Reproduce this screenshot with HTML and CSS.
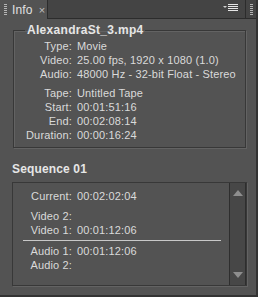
FILE: index.html
```html
<html>
<head>
  <title>Info</title>
  <link rel="stylesheet" href="styles.css">
</head>
<body>
  <div class="panel">
    <div class="tabbar">
      <div class="tab">
        <span class="grip"></span>
        <span class="tab-label">Info</span>
        <span class="tab-close">&times;</span>
      </div>
      <div class="tab-fill">
        <svg class="menu-icon" width="16" height="9" viewBox="0 0 16 9">
          <polygon points="0,2 4,2 2,4" fill="#cfcfcf"/>
          <rect x="5" y="0" width="10" height="1" fill="#e6e6e6"/>
          <rect x="5" y="2" width="10" height="1" fill="#e6e6e6"/>
          <rect x="5" y="4" width="10" height="1" fill="#e6e6e6"/>
          <rect x="5" y="6" width="10" height="1" fill="#e6e6e6"/>
        </svg>
      </div>
      <div class="grip-col"><span class="grip"></span></div>
    </div>

    <div class="content">
      <fieldset class="clip-box">
        <legend>AlexandraSt_3.mp4</legend>
        <div class="rows">
          <span class="lbl">Type:</span><span>Movie</span>
          <span class="lbl">Video:</span><span>25.00 fps, 1920 x 1080 (1.0)</span>
          <span class="lbl">Audio:</span><span>48000 Hz - 32-bit Float - Stereo</span>
        </div>
        <div class="rows group">
          <span class="lbl">Tape:</span><span>Untitled Tape</span>
          <span class="lbl">Start:</span><span>00:01:51:16</span>
          <span class="lbl">End:</span><span>00:02:08:14</span>
          <span class="lbl">Duration:</span><span>00:00:16:24</span>
        </div>
      </fieldset>

      <h3 class="seq-title">Sequence 01</h3>
      <div class="seq-box">
        <div class="seq-list">
          <div class="rows">
            <span class="lbl">Current:</span><span>00:02:02:04</span>
          </div>
          <div class="rows group2">
            <span class="lbl">Video 2:</span><span></span>
            <span class="lbl">Video 1:</span><span>00:01:12:06</span>
          </div>
          <div class="divider"></div>
          <div class="rows">
            <span class="lbl">Audio 1:</span><span>00:01:12:06</span>
            <span class="lbl">Audio 2:</span><span></span>
          </div>
        </div>
        <div class="scrollbar">
          <span class="arrow up"></span>
          <span class="arrow down"></span>
        </div>
      </div>
    </div>
  </div>
</body>
</html>
```

FILE: styles.css
```css
body {
  margin: 0;
  background: #535353;
  color: #dadada;
  font-family: "Liberation Sans", Arial, sans-serif;
  font-size: 11px;
  letter-spacing: 0.15px;
}

.panel {
  width: 256px;
  height: 295px;
  border-right: 2px solid #333;
  border-bottom: 2px solid #333;
  background: #535353;
}

.tabbar {
  display: flex;
  height: 19px;
}

.tab {
  display: flex;
  align-items: center;
  width: 47px;
  padding-left: 4px;
  box-sizing: border-box;
  background: #535353;
}

.grip {
  width: 3px;
  height: 11px;
  background: repeating-linear-gradient(#b5b5b5 0 1px, transparent 1px 2px);
}

.tab-label {
  margin-left: 5px;
  font-size: 12px;
  color: #e0e0e0;
}

.tab-close {
  margin-left: 6px;
  font-size: 11px;
  color: #c0c0c0;
}

.tab-fill {
  flex: 1;
  display: flex;
  align-items: center;
  justify-content: flex-end;
  background: #444;
  border-left: 1px solid #2c2c2c;
  border-bottom: 1px solid #2c2c2c;
  padding-right: 6px;
}

.menu-icon {
  margin-top: -1px;
}

.grip-col {
  width: 10px;
  display: flex;
  align-items: center;
  justify-content: center;
  background: #444;
  border-left: 1px solid #2c2c2c;
  border-bottom: 1px solid #2c2c2c;
}

.content {
  padding: 4px 0 0 13px;
}

.clip-box {
  width: 231px;
  margin: 0;
  padding: 2px 0 5px 0;
  border: 1px solid #383838;
  box-shadow: 1px 1px 0 #636363, inset 1px 1px 0 #636363;
}

.clip-box legend {
  margin-left: 11px;
  padding: 0 2px;
  font-weight: bold;
  font-size: 12px;
  letter-spacing: 0.3px;
  color: #e6e6e6;
}

.rows {
  display: grid;
  grid-template-columns: 58px 1fr;
  column-gap: 5px;
  line-height: 14px;
}

.lbl {
  text-align: right;
}

.group {
  margin-top: 5px;
}

.seq-title {
  margin: 14px 0 6px -1px;
  font-size: 12px;
  line-height: 14px;
  font-weight: bold;
  color: #e6e6e6;
}

.seq-box {
  display: flex;
  width: 233px;
  height: 102px;
  margin-left: -1px;
  border: 1px solid #383838;
  box-shadow: 1px 1px 0 #636363;
}

.seq-list {
  flex: 1;
  padding-top: 6px;
}

.seq-list .rows {
  grid-template-columns: 59px 1fr;
}

.group2 {
  margin-top: 6px;
}

.divider {
  height: 1px;
  margin: 3px 8px 3px 10px;
  background: #c8c8c8;
}

.scrollbar {
  width: 16px;
  display: flex;
  flex-direction: column;
  justify-content: space-between;
  align-items: center;
  padding: 7px 0;
  background: #474747;
  border-left: 1px solid #2e2e2e;
  box-shadow: inset -1px 0 0 #2e2e2e;
}

.arrow {
  width: 0;
  height: 0;
  border-left: 5px solid transparent;
  border-right: 5px solid transparent;
}

.arrow.up {
  border-bottom: 6px solid #8e8e8e;
}

.arrow.down {
  border-top: 6px solid #8e8e8e;
}
```
